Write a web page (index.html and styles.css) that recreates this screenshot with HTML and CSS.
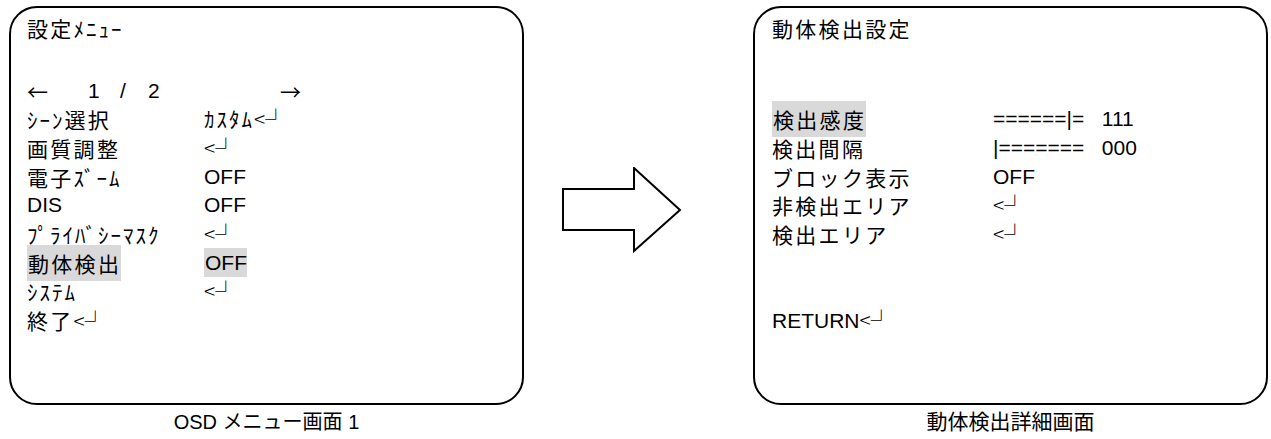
FILE: index.html
```html
<!DOCTYPE html>
<html lang="ja">
<head>
<meta charset="utf-8">
<link rel="stylesheet" href="styles.css">
</head>
<body>
<div class="page">
  <div class="panel">
    <div class="screen">
      <div class="title">設定<span class="hw">ﾒﾆｭｰ</span></div>
      <div class="pager">
        <span class="pg-left">←</span>
        <span class="pg-num1">1</span>
        <span class="pg-slash">/</span>
        <span class="pg-num2">2</span>
        <span class="pg-right">→</span>
      </div>
      <div class="row"><span class="lbl"><span class="hw">ｼｰﾝ</span>選択</span><span class="val"><span class="kana hw">ｶｽﾀﾑ</span><span class="ent">&lt;┘</span></span></div>
      <div class="row"><span class="lbl">画質調整</span><span class="val"><span class="ent">&lt;┘</span></span></div>
      <div class="row"><span class="lbl">電子<span class="hw">ｽﾞｰﾑ</span></span><span class="val">OFF</span></div>
      <div class="row"><span class="lbl lat">DIS</span><span class="val">OFF</span></div>
      <div class="row"><span class="lbl"><span class="hw">ﾌﾟﾗｲﾊﾞｼｰﾏｽｸ</span></span><span class="val"><span class="ent">&lt;┘</span></span></div>
      <div class="row"><span class="lbl"><span class="hl">動体検出</span></span><span class="val"><span class="hl">OFF</span></span></div>
      <div class="row"><span class="lbl"><span class="hw">ｼｽﾃﾑ</span></span><span class="val"><span class="ent">&lt;┘</span></span></div>
      <div class="row"><span class="lbl">終了<span class="ent">&lt;┘</span></span></div>
    </div>
    <div class="caption">OSD メニュー画面 1</div>
  </div>

  <div class="arrow-col">
    <svg class="arrow" width="120" height="86" viewBox="0 0 120 86">
      <polygon points="1,22 72,22 72,1 118,43 72,84 72,63 1,63" fill="#fff" stroke="#000" stroke-width="2" stroke-linejoin="miter"/>
    </svg>
  </div>

  <div class="panel">
    <div class="screen screen-r">
      <div class="title">動体検出設定</div>
      <div class="row"><span class="lbl"><span class="hl">検出感度</span></span><span class="val pre">======|=   111</span></div>
      <div class="row"><span class="lbl">検出間隔</span><span class="val pre">|=======   000</span></div>
      <div class="row"><span class="lbl">ブロック表示</span><span class="val">OFF</span></div>
      <div class="row"><span class="lbl">非検出エリア</span><span class="val"><span class="ent">&lt;┘</span></span></div>
      <div class="row"><span class="lbl">検出エリア</span><span class="val"><span class="ent">&lt;┘</span></span></div>
      <div class="row"></div>
      <div class="row"></div>
      <div class="row"><span class="lbl lat">RETURN<span class="ent">&lt;┘</span></span></div>
    </div>
    <div class="caption caption-r">動体検出詳細画面</div>
  </div>
</div>
</body>
</html>
```

FILE: styles.css
```css
html, body {
  margin: 0;
  padding: 0;
  background: #fff;
}

body {
  font-family: "Liberation Sans", "Noto Sans CJK JP", sans-serif;
  color: #000;
}

.page {
  display: flex;
  align-items: flex-start;
  padding: 6px 0 0 9px;
}

.panel {
  width: 515px;
  display: flex;
  flex-direction: column;
}

.screen {
  box-sizing: border-box;
  width: 515px;
  height: 399px;
  border: 2px solid #000;
  border-radius: 28px;
  padding: 6px 0 0 16px;
}

.screen-r {
  padding-left: 17px;
}

.title {
  font-size: 21px;
  letter-spacing: 2.3px;
  line-height: 28px;
  font-family: "Noto Sans CJK JP", sans-serif;
}

.pager {
  display: flex;
  align-items: center;
  margin-top: 35px;
  height: 28px;
  font-size: 21px;
}

.pg-left { width: 61px; font-family: "Noto Sans CJK JP", sans-serif; }
.pg-num1 { width: 32px; }
.pg-slash { width: 28px; }
.pg-num2 { width: 132px; }
.pg-right { font-family: "Noto Sans CJK JP", sans-serif; }

.screen-r .title + .row {
  margin-top: 63px;
}

.row {
  display: grid;
  grid-template-columns: 177px auto;
  align-items: center;
  height: 28.7px;
}

.screen-r .row {
  grid-template-columns: 221px auto;
}

.lbl {
  font-size: 21px;
  letter-spacing: 2.3px;
  font-family: "Noto Sans CJK JP", sans-serif;
  line-height: 26px;
  white-space: nowrap;
}

.lbl.lat {
  font-family: "Liberation Sans", "Noto Sans CJK JP", sans-serif;
  letter-spacing: 0;
}

.val {
  font-size: 21px;
  line-height: 26px;
  white-space: nowrap;
}

.pre {
  white-space: pre;
}

.kana {
  font-family: "Noto Sans CJK JP", sans-serif;
}

.hw {
  letter-spacing: 2px;
}

.ent {
  font-family: "Noto Sans CJK JP", sans-serif;
  font-size: 21px;
  font-weight: 300;
  letter-spacing: 0;
}

.hl {
  background: #d9d9d9;
  padding: 3px 0 3px 1px;
}

.caption {
  text-align: center;
  font-size: 20px;
  line-height: 24px;
  margin-top: 5px;
}

.caption-r {
  font-size: 21px;
}

.arrow-col {
  width: 229px;
  display: flex;
}

.arrow {
  margin-left: 38px;
  margin-top: 161px;
}
```
